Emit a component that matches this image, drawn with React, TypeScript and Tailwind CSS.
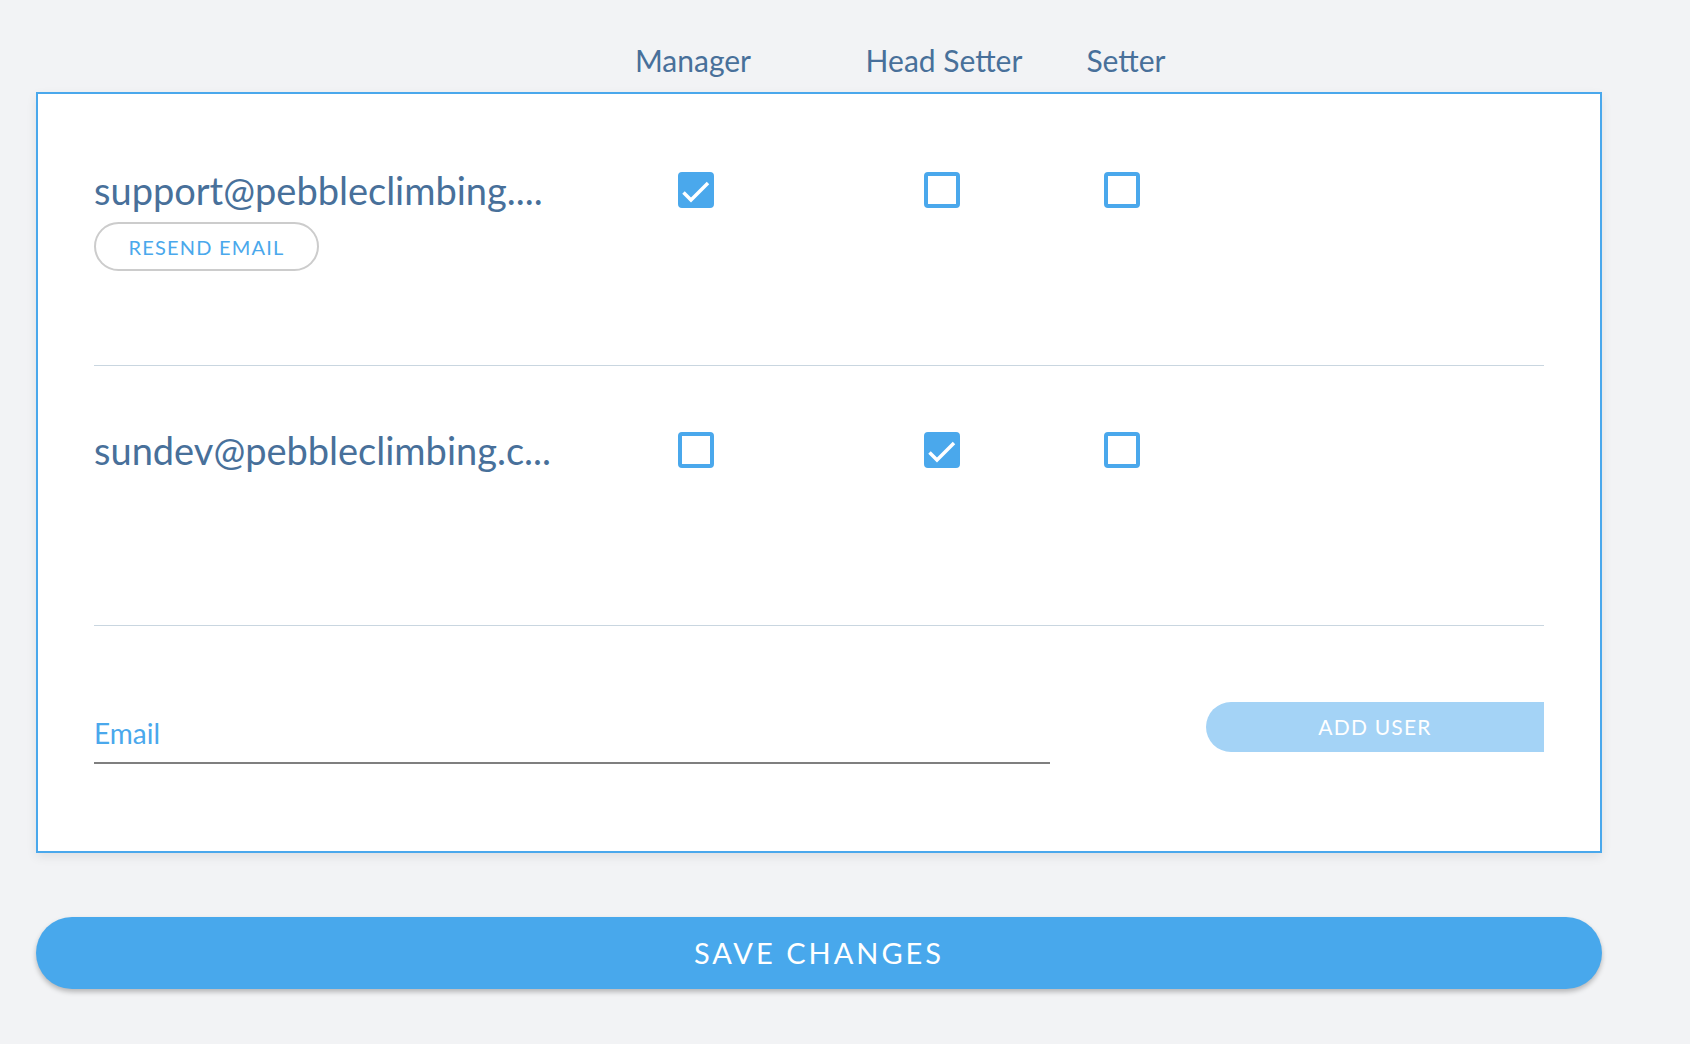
import { useState } from "react";

type Role = "manager" | "headSetter" | "setter";

type Member = {
  email: string;
  role: Role;
  pending: boolean;
};

const ROLES: Role[] = ["manager", "headSetter", "setter"];

function RoleCheckbox({ checked, onChange }: { checked: boolean; onChange: () => void }) {
  return (
    <button
      onClick={onChange}
      className={`flex h-[36px] w-[36px] items-center justify-center rounded-[4px] border-[4px] border-[#4aa8ec] ${
        checked ? "bg-[#4aa8ec]" : "bg-white"
      }`}
    >
      {checked && (
        <svg width="36" height="36" viewBox="0 0 36 36" className="shrink-0">
          <path d="M5.5 20.5 L13 28 L30 11" fill="none" stroke="white" strokeWidth="3.5" />
        </svg>
      )}
    </button>
  );
}

export default function App() {
  const [members, setMembers] = useState<Member[]>([
    { email: "support@pebbleclimbing....", role: "manager", pending: true },
    { email: "sundev@pebbleclimbing.c...", role: "headSetter", pending: false },
  ]);
  const [email, setEmail] = useState("");

  const setRole = (index: number, role: Role) => {
    setMembers((prev) => prev.map((m, i) => (i === index ? { ...m, role } : m)));
  };

  return (
    <div className="min-h-screen bg-[#f2f3f5] font-['Lato',sans-serif] text-[#48709a]">
      <div className="ml-[36px] w-[1566px]">
        {/* Column headers */}
        <div className="flex h-[92px] pl-[58px] pt-[40px] text-[30px] leading-[40px]">
          <div className="w-[542px]" />
          <div className="-ml-[3px] flex w-[120px] justify-center whitespace-nowrap">Manager</div>
          <div className="ml-[131px] flex w-[120px] justify-center whitespace-nowrap">Head Setter</div>
          <div className="ml-[62px] flex w-[120px] justify-center whitespace-nowrap">Setter</div>
        </div>

        <div className="border-2 border-[#4aa8ec] bg-white px-[56px] pt-[12px] shadow-[0_4px_10px_rgba(0,0,0,0.08)]">
          {members.map((member, index) => (
            <div key={member.email} className="h-[260px] border-b border-[#c9d6e0] pt-[66px]">
              <div className="flex items-start">
                <div className="w-[542px]">
                  <div className="whitespace-nowrap text-[38px] leading-[36px]">{member.email}</div>
                  {member.pending && (
                    <button className="mt-[14px] h-[49px] w-[225px] rounded-full border-2 border-[#cccccc] text-[20px] tracking-[1.2px] text-[#4aa8ec]">
                      RESEND EMAIL
                    </button>
                  )}
                </div>
                {ROLES.map((role, i) => (
                  <div
                    key={role}
                    className={`flex w-[120px] justify-center ${i === 1 ? "ml-[126px]" : i === 2 ? "ml-[60px]" : ""}`}
                  >
                    <RoleCheckbox checked={member.role === role} onChange={() => setRole(index, role)} />
                  </div>
                ))}
              </div>
            </div>
          ))}

          {/* Add user */}
          <div className="flex items-start justify-between pb-[87px] pt-[76px]">
            <input
              value={email}
              onChange={(e) => setEmail(e.target.value)}
              placeholder="Email"
              className="mt-[6px] h-[56px] w-[956px] border-b-2 border-[#7f7f7f] pb-[4px] text-[28px] text-[#48709a] outline-none placeholder:text-[#4aa8ec]"
            />
            <button className="h-[50px] w-[338px] rounded-l-full rounded-r-[14px] bg-[#a4d3f6] text-[21px] tracking-[1.2px] text-white">
              ADD USER
            </button>
          </div>
        </div>

        <button className="mt-[64px] h-[72px] w-full rounded-full bg-[#48a8ec] text-[29px] tracking-[3px] text-white shadow-[0_3px_5px_rgba(0,0,0,0.25)]">
          SAVE CHANGES
        </button>
      </div>
    </div>
  );
}
